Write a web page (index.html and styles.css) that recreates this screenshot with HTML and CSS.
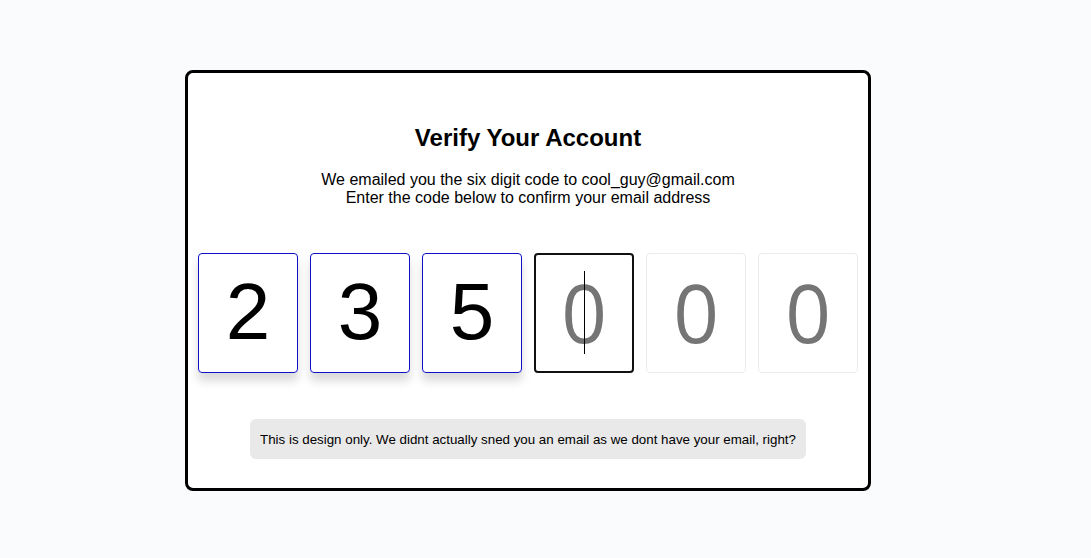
FILE: index.html
```html
<!DOCTYPE html>
<html lang="en">
<head>
<meta charset="utf-8">
<title>Verify Your Account</title>
<link rel="stylesheet" href="styles.css">
</head>
<body>
<main class="card">
  <h1 class="title">Verify Your Account</h1>
  <p class="subtitle">We emailed you the six digit code to cool_guy@gmail.com<br>Enter the code below to confirm your email address</p>
  <div class="code">
    <div class="digit filled">2</div>
    <div class="digit filled">3</div>
    <div class="digit filled">5</div>
    <div class="digit active"><span class="ph">0</span><span class="caret"></span></div>
    <div class="digit empty"><span class="ph">0</span></div>
    <div class="digit empty"><span class="ph">0</span></div>
  </div>
  <p class="note">This is design only. We didnt actually sned you an email as we dont have your email, right?</p>
</main>
</body>
</html>
```
FILE: styles.css
```css
html, body {
  margin: 0;
  padding: 0;
}
body {
  background: #f9fbfd;
  font-family: "Liberation Sans", Arial, sans-serif;
  color: #000;
  padding: 70px 0 0 185px;
  height: 558px;
  box-sizing: border-box;
}
.card {
  width: 686px;
  height: 421px;
  border: 3px solid #000;
  border-radius: 8px;
  background: #fff;
  display: flex;
  flex-direction: column;
  align-items: center;
  padding-top: 51px;
  box-sizing: border-box;
}
.title {
  margin: 0;
  font-size: 24px;
  font-weight: bold;
  line-height: 28px;
}
.subtitle {
  margin: 19px 0 0;
  font-size: 16px;
  line-height: 18px;
  text-align: center;
}
.code {
  display: flex;
  gap: 12px;
  margin-top: 46px;
}
.digit {
  position: relative;
  width: 100px;
  height: 120px;
  box-sizing: border-box;
  border-radius: 4px;
  display: flex;
  align-items: center;
  justify-content: center;
  font-size: 80px;
  line-height: 1;
  padding-bottom: 3px;
}
.filled {
  border: 1px solid #1010cc;
  box-shadow: 0 8px 10px rgba(0, 0, 0, 0.15);
}
.active {
  border: 2px solid #111;
}
.empty {
  border: 1px solid #ececec;
}
.ph {
  font-family: "Open Sans", sans-serif;
  color: #757575;
}
.caret {
  position: absolute;
  left: 48px;
  top: 16px;
  width: 1px;
  height: 83px;
  background: #000;
}
.note {
  margin: 46px 0 0;
  background: #e9e9e9;
  border-radius: 6px;
  padding: 0 10px;
  height: 40px;
  display: flex;
  align-items: center;
  font-size: 13.333px;
  box-sizing: border-box;
}
```
